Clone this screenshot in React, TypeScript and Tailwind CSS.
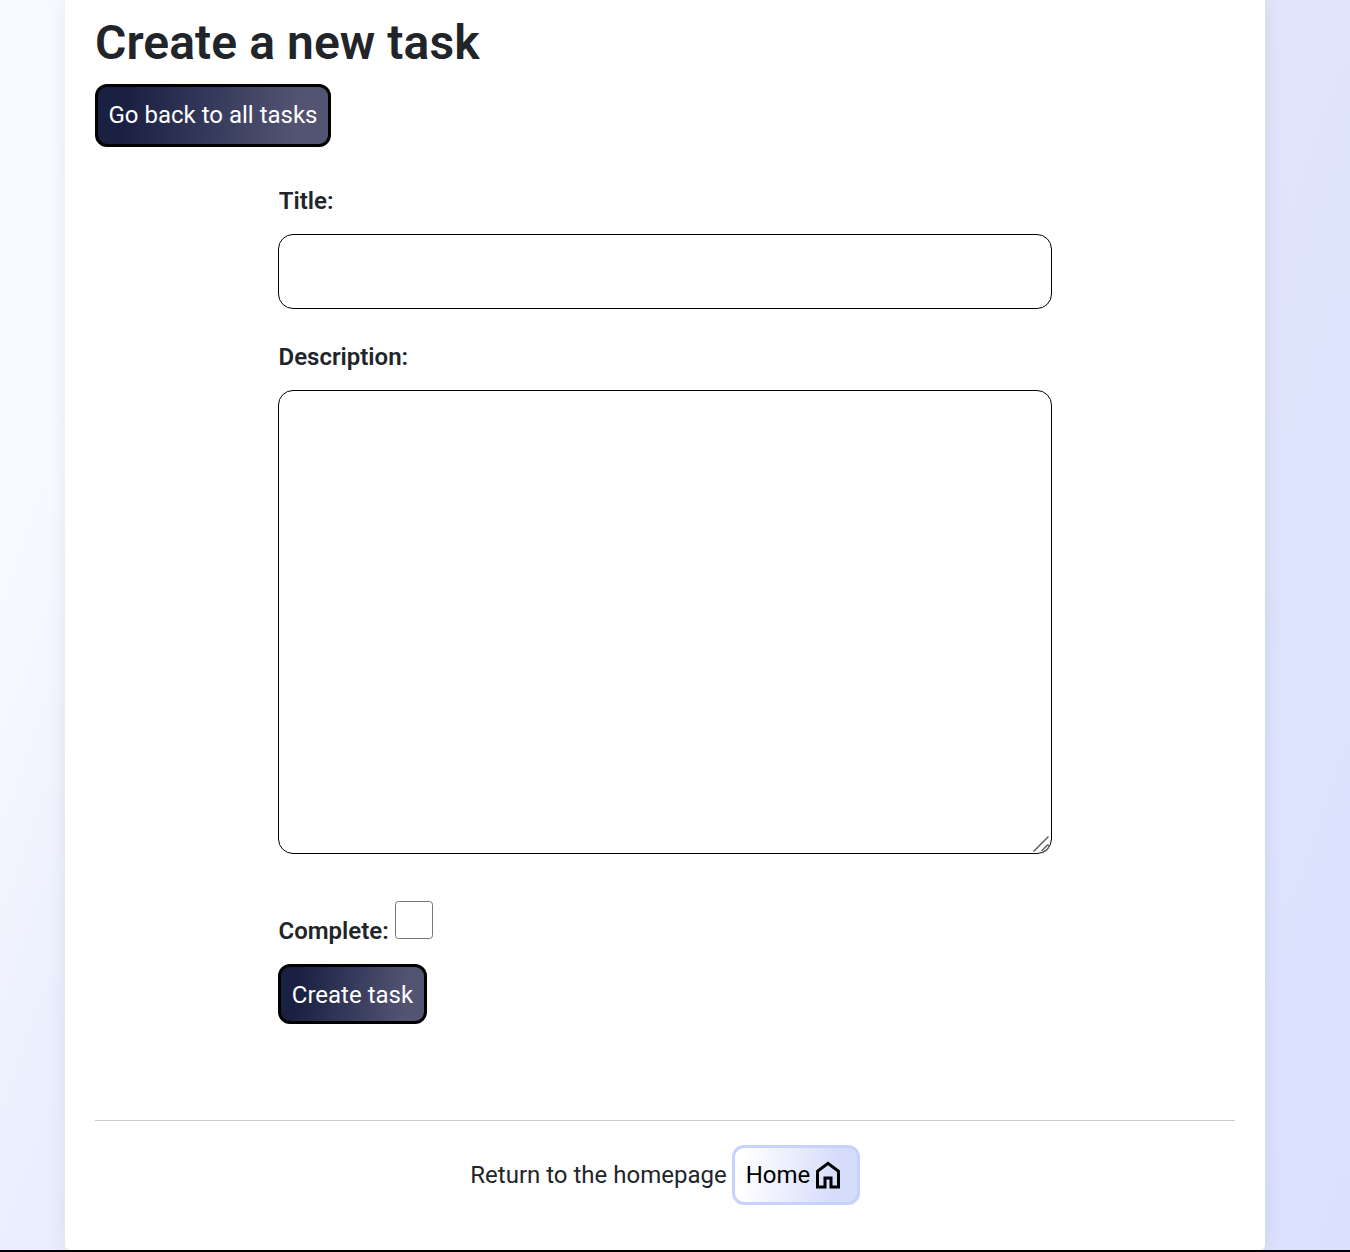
const darkButton =
  "flex rounded-[12px] border-3 border-black bg-[linear-gradient(97deg,#1a2042_12%,#525472_86%)] text-[24px] leading-[36px] text-white whitespace-nowrap";

function HomeIcon() {
  return (
    <svg className="size-[36px]" viewBox="0 -960 960 960" fill="currentColor" aria-hidden="true">
      <path d="M240-200h120v-240h240v240h120v-360L480-740 240-560v360Zm-80 80v-480l320-240 320 240v480H520v-240h-80v240H160Z" />
    </svg>
  );
}

function ResizeGrip() {
  return (
    <svg
      className="pointer-events-none absolute right-[2px] bottom-[1px] h-[17px] w-[17px]"
      viewBox="0 0 17 17"
      fill="none"
      stroke="#5c5c5c"
      strokeWidth="1.4"
      aria-hidden="true"
    >
      <path d="M0.5 15.5 15.5 0.5" />
      <path d="M8.5 15 14.5 9 16 9.5 M9.5 16.3 Q14 15 16 10.5" />
    </svg>
  );
}

export default function App() {
  return (
    <div className="h-[1252px] overflow-hidden border-b-2 border-black bg-[linear-gradient(109.6deg,#f9faff_0%,#f6f9ff_13%,#eaeefe_25%,#e0e5fc_73%,#dee3fe_87%,#d9e1fc_100%)] font-['Roboto',sans-serif] text-[24px] leading-[36px] text-[#212529]">
      <main className="ml-[65px] h-[1250px] w-[1200px] rounded-b-[5px] bg-white px-[30px] pt-[14px] shadow-[0_0_20px_rgba(0,0,0,0.08)]">
        <h1 className="text-[48px] leading-[58px] font-semibold tracking-[0.07px]">Create a new task</h1>
        <a href="#" className={darkButton + " mt-[12px] h-[63px] w-[236px] pt-[10px] pl-[10.5px]"}>
          Go back to all tasks
        </a>
        <form className="mx-auto mt-[36px] flex w-[774px] flex-col items-start">
          <label htmlFor="title" className="pl-[0.7px] font-semibold">Title:</label>
          <input id="title" className="mt-[15px] h-[75px] w-full rounded-[15px] border border-black bg-white px-3" />
          <label htmlFor="description" className="mt-[30px] pl-[0.5px] font-semibold">Description:</label>
          <div className="relative mt-[15px] h-[464px] w-full">
            <textarea id="description" className="block size-full resize-none rounded-[15px] border border-black bg-white px-3" />
            <ResizeGrip />
          </div>
          <div className="mt-[47px] flex h-[44px] items-start">
            <label htmlFor="complete" className="mt-[12px] w-[117px] pl-[0.5px] font-semibold">Complete:</label>
            <input id="complete" type="checkbox" className="size-[37.5px] appearance-none rounded-[3.5px] border-[1.5px] border-[#767676] bg-white" />
          </div>
          <button type="button" className={darkButton + " mt-[19px] h-[60px] w-[149px] pt-[10px] pl-[10.8px]"}>
            Create task
          </button>
        </form>
        <footer className="mt-[96px] flex justify-center border-t border-[#c8c9ca] pt-[24px]">
          <span className="mt-[12px] mr-[5.5px] ml-[0.5px]">Return to the homepage</span>
          <a href="#" className="flex h-[60px] w-[128px] items-center rounded-[12px] border-3 border-[#c7d2fe] bg-[linear-gradient(97deg,#ffffff_8%,#d6ddfb_80%)] pl-[10.5px] text-black">
            Home
            <HomeIcon />
          </a>
        </footer>
      </main>
    </div>
  );
}
